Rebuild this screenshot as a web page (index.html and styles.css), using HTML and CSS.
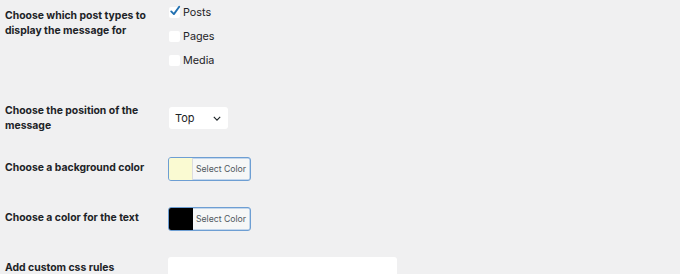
FILE: index.html
```html
<!DOCTYPE html>
<html>
<head>
<meta charset="utf-8">
<link rel="stylesheet" href="styles.css">
</head>
<body>
<div class="form">
  <div class="row row-types">
    <div class="row-label">Choose which post types to display the message for</div>
    <div class="row-field">
      <label class="check"><span class="box"><svg viewBox="0 0 12 12" width="12" height="12"><path d="M2.2 6.4 L4.9 9.1 L10.2 1.8" fill="none" stroke="#2271b1" stroke-width="1.9" stroke-linecap="round" stroke-linejoin="round"/></svg></span><span class="check-text">Posts</span></label>
      <label class="check"><span class="box"></span><span class="check-text">Pages</span></label>
      <label class="check"><span class="box"></span><span class="check-text">Media</span></label>
    </div>
  </div>
  <div class="row row-position">
    <div class="row-label">Choose the position of the message</div>
    <div class="row-field">
      <div class="select"><span>Top</span><svg viewBox="0 0 10 6" width="8" height="5"><path d="M1 1 L5 5 L9 1" fill="none" stroke="#1d2327" stroke-width="1.4"/></svg></div>
    </div>
  </div>
  <div class="row row-color">
    <div class="row-label">Choose a background color</div>
    <div class="row-field">
      <div class="color-btn"><span class="swatch swatch-bg"></span><span class="color-text">Select Color</span></div>
    </div>
  </div>
  <div class="row row-color">
    <div class="row-label">Choose a color for the text</div>
    <div class="row-field">
      <div class="color-btn"><span class="swatch swatch-text"></span><span class="color-text">Select Color</span></div>
    </div>
  </div>
  <div class="row row-css">
    <div class="row-label">Add custom css rules</div>
    <div class="row-field">
      <div class="textarea"></div>
    </div>
  </div>
</div>
</body>
</html>
```

FILE: styles.css
```css
html, body {
  margin: 0;
  padding: 0;
  background: #f0f0f1;
  overflow: hidden;
}
body {
  font-family: Inter, "Liberation Sans", sans-serif;
  color: #1d2327;
  width: 680px;
  height: 274px;
}
.form {
  padding-left: 5px;
}
.row {
  display: flex;
  align-items: flex-start;
}
.row-label {
  width: 148px;
  margin-right: 15px;
  font-size: 10.4px;
  font-weight: 650;
  line-height: 14.5px;
  padding-top: 16px;
}
.row-field {
  padding-top: 12px;
}
.row-types .row-label { padding-top: 9px; }
.row-types .row-field { padding-top: 0; }
.row-types { padding-bottom: 16px; }
.row-position .row-field { padding-top: 19px; }
.row-position { padding-bottom: 12px; }
.row-color { padding-bottom: 14px; }
.row-css { padding-bottom: 0; }

.check {
  display: flex;
  align-items: center;
  height: 24px;
  font-size: 10.8px;
  line-height: 14px;
  padding-left: 1px;
}
.check-text {
  margin-top: 2px;
}
.box {
  width: 11px;
  height: 11px;
  background: #fff;
  border-radius: 2px;
  margin-right: 3px;
  position: relative;
  flex: none;
}
.box svg {
  position: absolute;
  left: 0;
  top: -2px;
}
.select {
  width: 59px;
  height: 22px;
  box-sizing: border-box;
  margin-left: 1px;
  background: #fff;
  border-radius: 3px;
  display: flex;
  align-items: center;
  justify-content: space-between;
  padding: 0 7px 0 6px;
  font-size: 11px;
}
.select svg { margin-top: 1px; }
.color-btn {
  display: flex;
  width: 83px;
  height: 24px;
  box-sizing: border-box;
  border: 1px solid #6d9ed3;
  box-shadow: inset 0 0 0 0.5px #8fb6e0;
  border-radius: 3px;
  background: #f6f7f7;
  overflow: hidden;
}
.swatch {
  width: 23px;
  height: 100%;
  border-right: 1px solid #dcdcde;
  flex: none;
}
.swatch-bg { background: #fafad2; }
.swatch-text { background: #000; border-right-color: #000; }
.color-text {
  flex: 1;
  display: flex;
  align-items: center;
  justify-content: center;
  font-size: 8.7px;
  color: #50575e;
  padding-right: 1px;
}
.textarea {
  width: 229px;
  height: 18px;
  background: #fff;
  border-radius: 3px 3px 0 0;
}
```
